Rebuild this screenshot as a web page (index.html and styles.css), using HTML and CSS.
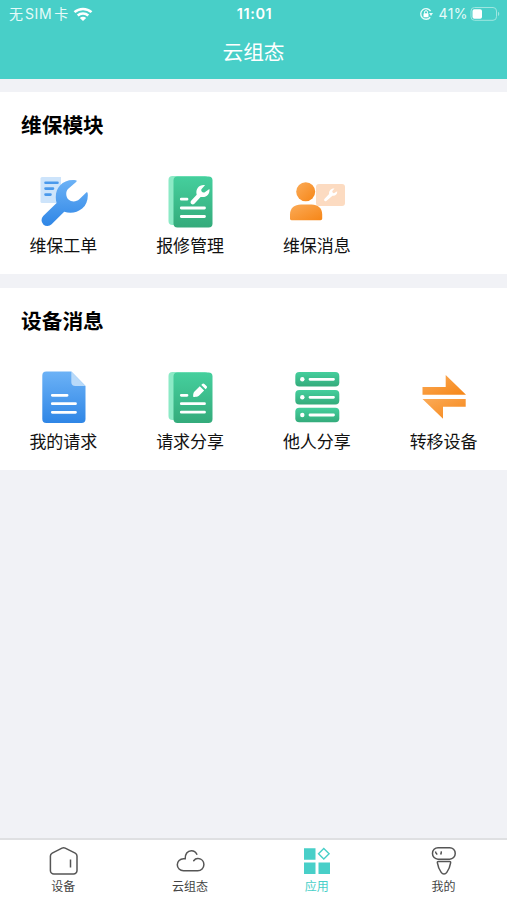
FILE: index.html
```html
<!DOCTYPE html>
<html lang="zh-CN">
<head>
    <meta charset="UTF-8">
    <meta name="viewport" content="width=device-width, initial-scale=1.0">
    <title>云组态</title>
    <link rel="stylesheet" href="styles.css">
</head>
<body>
    <svg class="defs" width="0" height="0">
        <defs>
            <linearGradient id="blue" x1="0" y1="0" x2="0" y2="1">
                <stop offset="0" stop-color="#6cb2f6"/>
                <stop offset="1" stop-color="#2f86e6"/>
            </linearGradient>
            <linearGradient id="green" x1="0" y1="0" x2="0" y2="1">
                <stop offset="0" stop-color="#45cf9d"/>
                <stop offset="1" stop-color="#34ab7b"/>
            </linearGradient>
            <linearGradient id="orange" x1="0" y1="0" x2="1" y2="1">
                <stop offset="0" stop-color="#fbab58"/>
                <stop offset="1" stop-color="#f68617"/>
            </linearGradient>
        </defs>
    </svg>

    <header class="header">
        <div class="status-bar">
            <div class="status-left">
                <span class="carrier">无<span class="sim">SIM</span>卡</span>
                <svg class="wifi" width="20" height="15" viewBox="0 0 20 15">
                    <g fill="none" stroke="#fff" stroke-width="2.5">
                        <path d="M1.5 5.2C6.2.8 13.800.8 18.500 5.200"/>
                        <path d="M4.700 8.500c3-2.800 7.600-2.800 10.600 0"/>
                    </g>
                    <path d="M6.800 10.900c1.900-1.700 4.500-1.700 6.400 0L10 14.100z" fill="#fff"/>
                </svg>
            </div>
            <span class="time">11:01</span>
            <div class="status-right">
                <svg width="14" height="14" viewBox="0 0 14 14">
                    <path d="M11.600 4.200A5.300 5.300 0 1 0 11.200 10.200" fill="none" stroke="#e6fbf9" stroke-width="1.400"/>
                    <path d="M10 6h4l-2 3z" fill="#e6fbf9"/>
                    <rect x="4.500" y="6.300" width="5" height="3.900" rx=".6" fill="#fff"/>
                    <path d="M5.500 6.500V5.200a1.500 1.500 0 0 1 3 0v1.300" fill="none" stroke="#fff"/>
                </svg>
                <span class="percent">41%</span>
                <svg width="30" height="16" viewBox="0 0 30 16">
                    <rect x="1" y="1.500" width="25.500" height="12.800" rx="3.500" fill="none" stroke="#9ee6e0"/>
                    <rect x="2.500" y="3.200" width="9.500" height="9.600" rx="1.800" fill="#fff"/>
                    <path d="M28 5.800c1.700.6 1.700 3.600 0 4.200z" fill="#9ee6e0"/>
                </svg>
            </div>
        </div>
        <h1>云组态</h1>
    </header>

    <main>
        <section class="card">
            <h2>维保模块</h2>
            <div class="grid">
                <a class="item">
                    <svg width="60" height="54" viewBox="0 0 60 54">
                        <path d="M9 3h19v26H9a1.500 1.500 0 0 1-1.500-1.500v-23A1.500 1.500 0 0 1 9 3z" fill="#cde4fb"/>
                        <path d="M12.500 8.700h12M12.500 14.600h7.500M12.500 20.600h5" stroke="#4a99ec" stroke-width="2.600" stroke-linecap="round"/>
                        <path d="M42.500 6.200c1.500.2 1.400 1.100.6 1.800L35 15c-2.600 3-2.200 8 .5 10.500 3 2.800 8 2.400 10.800-.2l6.700-6.500c.8-.8 1.600-.5 1.700.6.600 5.600-1.200 11.600-5.500 15.200-5.200 4.400-12 5-18 3.200L18.600 50.300a5.800 5.800 0 0 1-8.400-8.200l13.400-13c-3.400-12 3.800-24.400 18.900-22.900z" fill="url(#blue)"/>
                    </svg>
                    <span>维保工单</span>
                </a>
                <a class="item">
                    <svg width="60" height="54" viewBox="0 0 60 54">
                        <rect x="8.500" y="2" width="40" height="49" rx="4" fill="#8ceac6"/>
                        <rect x="13.500" y="2.500" width="39" height="51" rx="4" fill="url(#green)"/>
                        <path d="M21.300 25.200h5.700M21.300 34h23.200M21.300 42.500h23.200" stroke="#fff" stroke-width="2.800" stroke-linecap="round"/>
                        <path d="M45 11.200l-3.600 4c-.8 1.800 1.200 3.900 3 3.200l5-3.500c.8 4.700-2.900 9.200-8.800 8l-6.200 6.800c-2.200 2-5-.7-3.300-3l5.600-5.900c-1.500-6 2.800-10.400 8.300-9.600z" fill="#fff"/>
                    </svg>
                    <span>报修管理</span>
                </a>
                <a class="item">
                    <svg width="60" height="54" viewBox="0 0 60 54">
                        <rect x="29" y="10" width="29" height="22" rx="3" fill="#fcdbc1"/>
                        <path d="M47.500 14.500l-2.200 2.600c-.2 1.300.8 2.200 2 2l2.900-1.900c.3 3.200-2 5-4.700 4.500l-6.200 5.200c-1.600.9-2.900-.8-1.700-2.200l4.500-4.700c-.5-3.200 2-5.900 5.400-5.500z" fill="#fff"/>
                        <circle cx="18.700" cy="17.800" r="9.500" fill="url(#orange)"/>
                        <path d="M3 44.500v-4C3 34 7.500 30.500 14 30.500h10.500c6.500 0 10.700 3.800 10.700 10v4c0 1-.7 1.700-1.700 1.700h-29C3.600 46.200 3 45.600 3 44.500z" fill="url(#orange)"/>
                    </svg>
                    <span>维保消息</span>
                </a>
            </div>
        </section>

        <section class="card">
            <h2>设备消息</h2>
            <div class="grid">
                <a class="item">
                    <svg width="60" height="54" viewBox="0 0 60 54">
                        <path d="M13.300 1.500h25L52.500 16v33a4 4 0 0 1-4 4H13.300a4 4 0 0 1-4-4V5.500a4 4 0 0 1 4-4z" fill="url(#blue)"/>
                        <path d="M38.300 1.500L52.500 16H42.300a4 4 0 0 1-4-4z" fill="#b9daf9"/>
                        <path d="M19.300 25.300h14.800M19.300 33.700h23.200M19.300 42.300h23.200" stroke="#fff" stroke-width="2.800" stroke-linecap="round"/>
                    </svg>
                    <span>我的请求</span>
                </a>
                <a class="item">
                    <svg width="60" height="54" viewBox="0 0 60 54">
                        <rect x="8.500" y="2" width="40" height="48" rx="4" fill="#8ceac6"/>
                        <rect x="13.500" y="2.500" width="39" height="50.500" rx="4" fill="url(#green)"/>
                        <path d="M21.300 25.300h5.700M21.300 33.700h23.200M21.300 42.200h23.200" stroke="#fff" stroke-width="2.800" stroke-linecap="round"/>
                        <path d="M39.800 16.300l4.300 4.200-5.200 5.300c-1.200 1.100-3.800 1.300-5.600 1.100-.4-2 0-4.300 1.200-5.500zM41.300 14.900l.8-.9c.8-.7 1.600-.7 2.300 0l2.100 2.100c.7.7.7 1.500 0 2.200l-.9.900z" fill="#fff"/>
                    </svg>
                    <span>请求分享</span>
                </a>
                <a class="item">
                    <svg width="60" height="54" viewBox="0 0 60 54">
                        <g fill="url(#green)">
                            <rect x="8.300" y="2" width="44" height="14.500" rx="4"/>
                            <rect x="8.300" y="20" width="44" height="14.500" rx="4"/>
                            <rect x="8.300" y="37.800" width="44" height="14.500" rx="4"/>
                        </g>
                        <g fill="#fff">
                            <circle cx="15.300" cy="9.300" r="2.200"/>
                            <circle cx="15.300" cy="27.300" r="2.200"/>
                            <circle cx="15.300" cy="45" r="2.200"/>
                        </g>
                        <path d="M23 9.300h23.500M23 27.300h23.500M23 45h23.500" stroke="#fff" stroke-width="2.800" stroke-linecap="round"/>
                    </svg>
                    <span>他人分享</span>
                </a>
                <a class="item">
                    <svg width="60" height="54" viewBox="0 0 60 54">
                        <path d="M8.500 17h23.200V5L52 24.800H8.500z" fill="url(#orange)"/>
                        <path d="M8.500 29H51.700v7.800H29v11.900z" fill="url(#orange)"/>
                    </svg>
                    <span>转移设备</span>
                </a>
            </div>
        </section>
    </main>

    <nav class="tab-bar">
        <a class="tab">
            <svg width="30" height="30" viewBox="0 0 30 30">
                <path d="M14 2.200a3.500 3.500 0 0 1 3.200 0l10 4.900c1.200.6 1.800 1.600 1.800 2.900v14.500a3.500 3.500 0 0 1-3.500 3.500H5.900a3.500 3.500 0 0 1-3.500-3.500V10c0-1.300.6-2.300 1.800-2.900z" fill="none" stroke="#555" stroke-width="1.500"/>
                <path d="M22.500 13.500v8" stroke="#555" stroke-width="1.500"/>
            </svg>
            <span>设备</span>
        </a>
        <a class="tab">
            <svg width="30" height="30" viewBox="0 0 30 30">
                <path d="M18.700 14.700c1.200-1.600 2.900-2.400 4.800-2.100 3.100.4 5.400 2.900 5.400 5.900 0 3.500-2.700 6.200-6.200 6.200H8.500c-3.500 0-6.200-2.500-6.200-5.900 0-3.500 2.700-6.100 6.200-6.100h1.700c-.2-4.600 2.200-8 6.200-8 2.400 0 4.400 1.300 5.400 3.500" fill="none" stroke="#555" stroke-width="1.500" stroke-linecap="round"/>
            </svg>
            <span>云组态</span>
        </a>
        <a class="tab active">
            <svg width="30" height="30" viewBox="0 0 30 30">
                <path d="M2 2.200h11.500v11.500H2zM2 16.500h11.500V28H2zM16.500 16.500H28V28H16.500z" fill="#48cfc8"/>
                <path d="M21.800 2.500l5.300 5.300-5.300 5.300-5.300-5.300z" fill="none" stroke="#48cfc8" stroke-width="1.400"/>
            </svg>
            <span>应用</span>
        </a>
        <a class="tab">
            <svg width="30" height="30" viewBox="0 0 30 30">
                <rect x="3.500" y="1.700" width="22.700" height="11.500" rx="5.500" fill="none" stroke="#555" stroke-width="1.500"/>
                <path d="M6.500 5.500c.2 1.400.8 2.200 1.800 3M12.200 5.300c.2 1.200 0 2.300-.6 3.200" fill="none" stroke="#444" stroke-width="1.400"/>
                <path d="M9.500 15.400h11c.8 0 1.300.6 1.100 1.400-.6 3.700-1.800 6.900-3.800 9.600-1.500 2.100-4.100 2.100-5.600 0-2-2.700-3.200-5.900-3.800-9.600-.2-.8.300-1.400 1.100-1.400z" fill="none" stroke="#555" stroke-width="1.500"/>
            </svg>
            <span>我的</span>
        </a>
    </nav>
</body>
</html>
```
FILE: styles.css
```css
* {
    box-sizing: border-box;
}

body {
    font-family: "Noto Sans CJK SC", sans-serif;
    margin: 0;
    height: 100vh;
    display: flex;
    flex-direction: column;
    background-color: #f1f2f6;
    color: #111;
}

.defs {
    position: absolute;
}

.header {
    height: 79px;
    background-color: #48cfc8;
    color: #fff;
}

.status-bar {
    display: grid;
    grid-template-columns: 1fr auto 1fr;
    align-items: center;
    height: 28px;
    padding: 0 7px 0 9px;
    font-family: Inter, "Noto Sans CJK SC", sans-serif;
    font-size: 14px;
    line-height: 20px;
}

.status-left,
.status-right {
    display: flex;
    align-items: center;
}

.status-right {
    justify-content: flex-end;
}

.carrier {
    color: #e6fbf9;
}

.sim {
    margin: 0 2px;
    letter-spacing: 0.6px;
}

.wifi {
    margin-left: 5px;
}

.time {
    font-weight: 600;
    font-size: 14.5px;
    letter-spacing: 0.6px;
}

.percent {
    margin: 0 2px 0 6px;
    letter-spacing: 0.4px;
    color: #e6fbf9;
}

h1 {
    margin: 8px 0 0;
    font-size: 20.7px;
    font-weight: 400;
    line-height: 30px;
    text-align: center;
}

main {
    flex: 1;
    padding-top: 13px;
}

.card {
    height: 182px;
    margin-bottom: 14px;
    padding-top: 17px;
    background-color: #fff;
}

h2 {
    margin: 0 0 35px 21px;
    font-size: 20.7px;
    font-weight: 700;
    line-height: 30px;
    color: #000;
}

.grid {
    display: grid;
    grid-template-columns: repeat(4, 1fr);
}

.item {
    display: flex;
    flex-direction: column;
    align-items: center;
    font-size: 17px;
    line-height: 24px;
}

.item span {
    margin-top: 5px;
}

.tab-bar {
    display: grid;
    grid-template-columns: repeat(4, 1fr);
    height: 62px;
    padding-top: 6px;
    background-color: #fff;
    border-top: 2px solid #dfe0e2;
}

.tab {
    display: flex;
    flex-direction: column;
    align-items: center;
    font-size: 12px;
    line-height: 20px;
    color: #444;
}

.tab.active {
    color: #48cfc8;
}
```
